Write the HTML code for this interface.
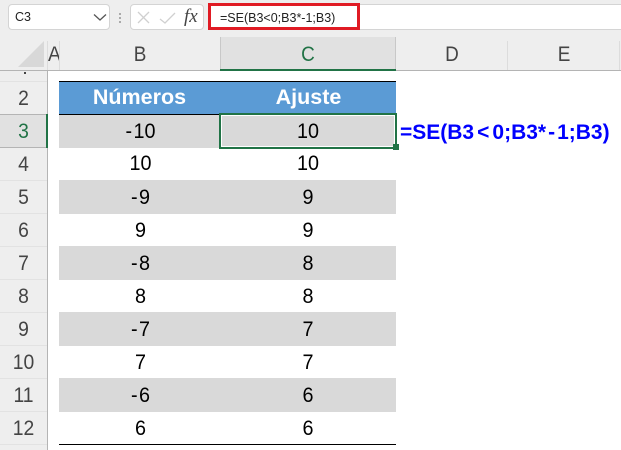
<!DOCTYPE html>
<html><head><meta charset="utf-8"><style>
html,body{margin:0;padding:0}
body{width:621px;height:450px;overflow:hidden;position:relative;background:#fff;font-family:"Liberation Sans",sans-serif}
div{position:absolute;box-sizing:border-box}
.t{text-align:center;white-space:nowrap;font-size:21.5px;color:#000;height:33px;line-height:33px;transform:scaleX(.92)}
.h{font-weight:bold;color:#fff;transform:none;line-height:33px}
.t i{font-style:normal;margin-right:1.5px}
.rh{left:0;width:47px;height:33px;border-bottom:1px solid #e2e2e2}
.rh span{position:absolute;left:0;width:47px;text-align:center;font-size:21px;color:#444;line-height:33px;transform:scaleX(.92)}
.ch{top:39px;height:30px;line-height:30px;text-align:center;font-size:21.5px;color:#444;transform:scaleX(.88)}
.g{left:59px;width:337px;height:34px;background:#d9d9d9}
.f span{margin:0 3px}
.f b{font-weight:bold;margin:0 2px}
</style></head><body>
<div style="left:0;top:0;width:621px;height:71px;background:#eee"></div>
<div style="left:0;top:70px;width:48px;height:380px;background:#eee"></div>
<div style="left:0;top:70px;width:621px;height:1px;background:#b4b4b4"></div>
<div style="left:47px;top:41px;width:1px;height:29px;background:#dcdcdc"></div>
<div style="left:47px;top:70px;width:1px;height:380px;background:#b4b4b4"></div>
<div style="left:8px;top:4px;width:102px;height:26px;background:#fff;border:1px solid #d4d4d4;border-radius:4px"></div>
<div style="left:15px;top:4px;height:26px;line-height:27px;font-size:12.5px;color:#222">C3</div>
<svg style="position:absolute;left:93px;top:13px" width="14" height="9"><path d="M1 1.5L7 7L13 1.5" fill="none" stroke="#555" stroke-width="1.3"/></svg>
<div style="left:119px;top:13px;width:2px;height:2px;background:#aaa"></div>
<div style="left:119px;top:17px;width:2px;height:2px;background:#aaa"></div>
<div style="left:119px;top:21px;width:2px;height:2px;background:#aaa"></div>
<div style="left:130px;top:4px;width:74px;height:26px;background:#fff;border:1px solid #d4d4d4;border-radius:4px"></div>
<svg style="position:absolute;left:136px;top:10px" width="40" height="16"><path d="M2 2L13 13M13 2L2 13" fill="none" stroke="#d0d0d0" stroke-width="1.3"/><path d="M24 9L29 13L39 3" fill="none" stroke="#d0d0d0" stroke-width="1.3"/></svg>
<div style="left:184px;top:5px;height:24px;font:italic 19px/24px 'Liberation Serif',serif;color:#444">fx</div>
<div style="left:208px;top:4px;width:413px;height:26px;background:#fff;border-top:1px solid #d4d4d4;border-bottom:1px solid #d4d4d4"></div>
<div style="left:208px;top:3px;width:152px;height:27px;background:#fff;border:3px solid #e01b24"></div>
<div style="left:220px;top:6px;height:24px;line-height:25px;font-size:12.5px;color:#222;white-space:nowrap">=SE(B3&lt;0;B3*-1;B3)</div>

<svg style="position:absolute;left:17px;top:41px" width="28" height="27"><path d="M27 0V26H1Z" fill="#d8d8d8"/></svg>
<div style="left:59px;top:41px;width:1px;height:29px;background:#dcdcdc"></div>
<div style="left:220px;top:37px;width:176px;height:34px;background:#e1e1e1;border-left:1px solid #c8c8c8;border-right:1px solid #c8c8c8"></div>
<div style="left:220px;top:69px;width:176px;height:2px;background:#217346"></div>
<div style="left:507px;top:41px;width:1px;height:29px;background:#dcdcdc"></div>
<div style="left:619px;top:41px;width:1px;height:29px;background:#dcdcdc"></div>
<div style="left:48px;top:39px;width:11px;height:30px;overflow:hidden"><div style="left:0;top:0;line-height:30px;font-size:21.5px;color:#444;transform:scaleX(.9);transform-origin:0 0">A</div></div>
<div class="ch" style="left:60px;width:160px">B</div>
<div class="ch" style="left:220px;width:176px;color:#217346">C</div>
<div class="ch" style="left:396px;width:112px">D</div>
<div class="ch" style="left:508px;width:112px">E</div>

<div style="left:24px;top:72px;width:2px;height:2px;background:#444"></div>
<div style="left:0;top:81px;width:47px;height:1px;background:#e2e2e2"></div>
<div class="rh" style="top:82px"><span>2</span></div>
<div class="rh" style="top:114px;height:34px;background:#e1e1e1;border-bottom:1px solid #b4b4b4;border-top:1px solid #b4b4b4"><span style="color:#217346;top:0">3</span></div>
<div style="left:46px;top:114px;width:2px;height:34px;background:#217346"></div>
<div class="rh" style="top:148px"><span>4</span></div>
<div class="rh" style="top:181px"><span>5</span></div>
<div class="rh" style="top:214px"><span>6</span></div>
<div class="rh" style="top:247px"><span>7</span></div>
<div class="rh" style="top:280px"><span>8</span></div>
<div class="rh" style="top:313px"><span>9</span></div>
<div class="rh" style="top:346px"><span>10</span></div>
<div class="rh" style="top:379px"><span>11</span></div>
<div class="rh" style="top:412px"><span>12</span></div>

<div style="left:59px;top:81px;width:337px;height:34px;background:#5b9bd5;border-top:1px solid #000;border-bottom:1px solid #000"></div>
<div class="t h" style="left:59px;width:161px;top:81px">Números</div>
<div class="t h" style="left:220px;width:177px;top:81px">Ajuste</div>

<div class="g" style="top:115px;height:33px"></div>
<div class="g" style="top:180px"></div>
<div class="g" style="top:246px"></div>
<div class="g" style="top:312px"></div>
<div class="g" style="top:378px"></div>
<div style="left:59px;top:444px;width:337px;height:1px;background:#000"></div>

<div class="t" style="left:59px;width:163px;top:115px"><i>-</i>10</div><div class="t" style="left:220px;width:176px;top:115px">10</div>
<div class="t" style="left:59px;width:163px;top:147px">10</div><div class="t" style="left:220px;width:176px;top:147px">10</div>
<div class="t" style="left:59px;width:163px;top:181px"><i>-</i>9</div><div class="t" style="left:220px;width:176px;top:181px">9</div>
<div class="t" style="left:59px;width:163px;top:214px">9</div><div class="t" style="left:220px;width:176px;top:214px">9</div>
<div class="t" style="left:59px;width:163px;top:247px"><i>-</i>8</div><div class="t" style="left:220px;width:176px;top:247px">8</div>
<div class="t" style="left:59px;width:163px;top:280px">8</div><div class="t" style="left:220px;width:176px;top:280px">8</div>
<div class="t" style="left:59px;width:163px;top:313px"><i>-</i>7</div><div class="t" style="left:220px;width:176px;top:313px">7</div>
<div class="t" style="left:59px;width:163px;top:346px">7</div><div class="t" style="left:220px;width:176px;top:346px">7</div>
<div class="t" style="left:59px;width:163px;top:379px"><i>-</i>6</div><div class="t" style="left:220px;width:176px;top:379px">6</div>
<div class="t" style="left:59px;width:163px;top:412px">6</div><div class="t" style="left:220px;width:176px;top:412px">6</div>

<div style="left:219px;top:113px;width:178px;height:36px;border:2px solid #217346"></div>
<div style="left:221px;top:115px;width:174px;height:32px;border:1px solid #fff"></div>
<div style="left:393px;top:144px;width:6px;height:6px;background:#217346"></div>
<div class="f" style="left:400px;top:118px;height:30px;line-height:30px;font-size:21px;font-weight:bold;color:#0000ff;white-space:nowrap">=SE(B3<span>&lt;</span>0;B3*<b>-</b>1;B3)</div>
</body></html>
